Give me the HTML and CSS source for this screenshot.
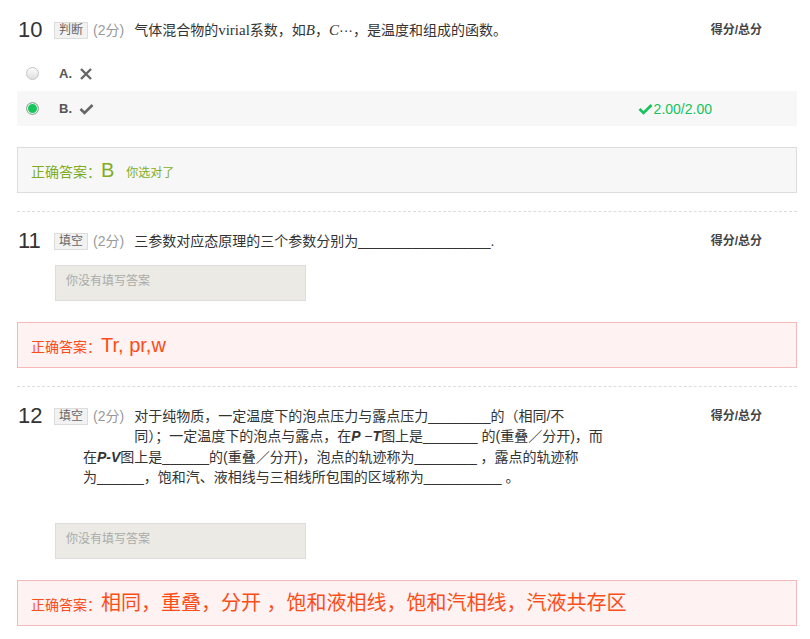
FILE: index.html
```html
<!DOCTYPE html>
<html lang="zh-CN">
<head>
<meta charset="utf-8">
<title>作业详情</title>
<link rel="stylesheet" href="styles.css">
</head>
<body>
<div class="page">

  <div class="question first">
    <div class="q-head">
      <span class="q-num">10</span>
      <span class="q-type">判断</span>
      <span class="q-points">(2分)</span>
      <div class="q-stem">气体混合物的<span class="serif">virial</span>系数，如<i class="serif">B</i>，<i class="serif">C</i>···，是温度和组成的函数。</div>
      <span class="q-total">得分/总分</span>
    </div>
    <div class="options">
      <div class="option">
        <span class="radio"></span>
        <span class="opt-label">A.</span>
        <svg class="opt-icon" width="14" height="14" viewBox="0 0 14 14"><path d="M2 2L12 12M12 2L2 12" stroke="#666" stroke-width="2.4" fill="none"/></svg>
      </div>
      <div class="option selected">
        <span class="radio on"></span>
        <span class="opt-label">B.</span>
        <svg class="opt-icon" width="15" height="12" viewBox="0 0 15 12"><path d="M1.5 6L5.5 10L13.5 2" stroke="#666" stroke-width="2.6" fill="none"/></svg>
        <span class="got"><svg class="got-icon" width="15" height="12" viewBox="0 0 15 12"><path d="M1.5 6L5.5 10L13.5 2" stroke="#13c35c" stroke-width="2.6" fill="none"/></svg>2.00/2.00</span>
      </div>
    </div>
    <div class="answer right">正确答案：<span class="ans-big">B</span><span class="ans-note">你选对了</span></div>
  </div>

  <div class="question">
    <div class="q-head">
      <span class="q-num">11</span>
      <span class="q-type">填空</span>
      <span class="q-points">(2分)</span>
      <div class="q-stem">三参数对应态原理的三个参数分别为_________________.</div>
      <span class="q-total">得分/总分</span>
    </div>
    <div class="blank">你没有填写答案</div>
    <div class="answer wrong">正确答案：<span class="ans-big">Tr, pr,w</span></div>
  </div>

  <div class="question">
    <div class="q-head">
      <span class="q-num">12</span>
      <span class="q-type">填空</span>
      <span class="q-points">(2分)</span>
      <div class="q-stem multi">
        <div class="line">对于纯物质，一定温度下的泡点压力与露点压力________的（相同/不</div>
        <div class="line">同）；一定温度下的泡点与露点，在<b><i>P</i></b> −<b><i>T</i></b>图上是_______ 的(重叠／分开)，而</div>
      </div>
      <span class="q-total">得分/总分</span>
    </div>
    <div class="q-stem-cont">
      <div class="line">在<b><i>P-V</i></b>图上是______的(重叠／分开)，泡点的轨迹称为________ ，露点的轨迹称</div>
      <div class="line">为______，饱和汽、液相线与三相线所包围的区域称为__________ 。</div>
    </div>
    <div class="blank tall-gap">你没有填写答案</div>
    <div class="answer wrong">正确答案：<span class="ans-big">相同，重叠，分开 ，饱和液相线，饱和汽相线，汽液共存区</span></div>
  </div>

</div>
</body>
</html>
```

FILE: styles.css
```css
* { box-sizing: border-box; }

body {
  margin: 0;
  background: #fff;
  color: #333;
  font-family: "Liberation Sans", "Noto Sans CJK SC", sans-serif;
  font-size: 14px;
}

.page {
  padding: 1px 13px 0 17px;
}

.question {
  padding: 17px 0 18px;
  border-bottom: 1px dashed #ddd;
}

.q-head {
  display: flex;
  align-items: flex-start;
}

.q-num {
  width: 37px;
  padding-left: 1px;
  font-size: 22px;
  line-height: 24px;
  color: #333;
}

.q-type {
  margin-top: 4px;
  height: 17px;
  padding: 0 4px;
  border: 1px solid #ddd;
  background: #f2f2f2;
  color: #666;
  font-size: 12px;
  line-height: 15px;
}

.q-points {
  margin-left: 5px;
  line-height: 24px;
  color: #999;
  font-size: 14px;
}

.q-stem {
  flex: 1;
  margin-left: 10px;
  line-height: 24px;
  color: #333;
  white-space: nowrap;
}

.q-stem.multi {
  line-height: 20.5px;
  padding-top: 1.5px;
}

.q-stem-cont {
  padding-left: 66px;
  line-height: 20.5px;
  white-space: nowrap;
}

.serif {
  font-family: "Liberation Serif", serif;
  font-size: 15px;
}

.q-total {
  margin-right: 35px;
  line-height: 24px;
  font-size: 12px;
  font-weight: bold;
  color: #444;
}

.options {
  margin-top: 14px;
}

.option {
  display: flex;
  align-items: center;
  height: 35px;
  padding-left: 9px;
}

.option.selected {
  background: #f7f7f7;
}

.radio {
  width: 13px;
  height: 13px;
  border-radius: 50%;
  border: 1px solid #c4c4c4;
  background: linear-gradient(#fdfdfd, #dedede);
}

.radio.on {
  border-color: #a9a9a9;
  background: #17c65a;
  box-shadow: inset 0 0 0 1px #eaf7ee;
}

.opt-label {
  margin-left: 20px;
  font-size: 13px;
  font-weight: bold;
  color: #555;
}

.opt-icon {
  margin-left: 7px;
}

.got {
  display: flex;
  align-items: center;
  margin-left: auto;
  margin-right: 85px;
  color: #13c35c;
  font-size: 14px;
}

.got-icon {
  margin-right: 1px;
}

.answer {
  margin-top: 21px;
  height: 46px;
  padding: 1px 13px 0;
  line-height: 42px;
  font-size: 14px;
  white-space: nowrap;
}

.answer.right {
  border: 1px solid #ddd;
  background: #f7f7f7;
  color: #7fad1f;
}

.answer.wrong {
  border: 1px solid #f6b9b9;
  background: #fff2f2;
  color: #fb4d17;
}

.ans-big {
  font-size: 20px;
}

.ans-note {
  margin-left: 12px;
  font-size: 12px;
}

.blank {
  margin: 12px 0 0 38px;
  width: 251px;
  height: 36px;
  padding: 6px 10px 0;
  border: 1px solid #dcdcdc;
  background: #ebeae4;
  color: #aaa;
  font-size: 12px;
  line-height: 18px;
}

.blank.tall-gap {
  margin-top: 35px;
}
```
